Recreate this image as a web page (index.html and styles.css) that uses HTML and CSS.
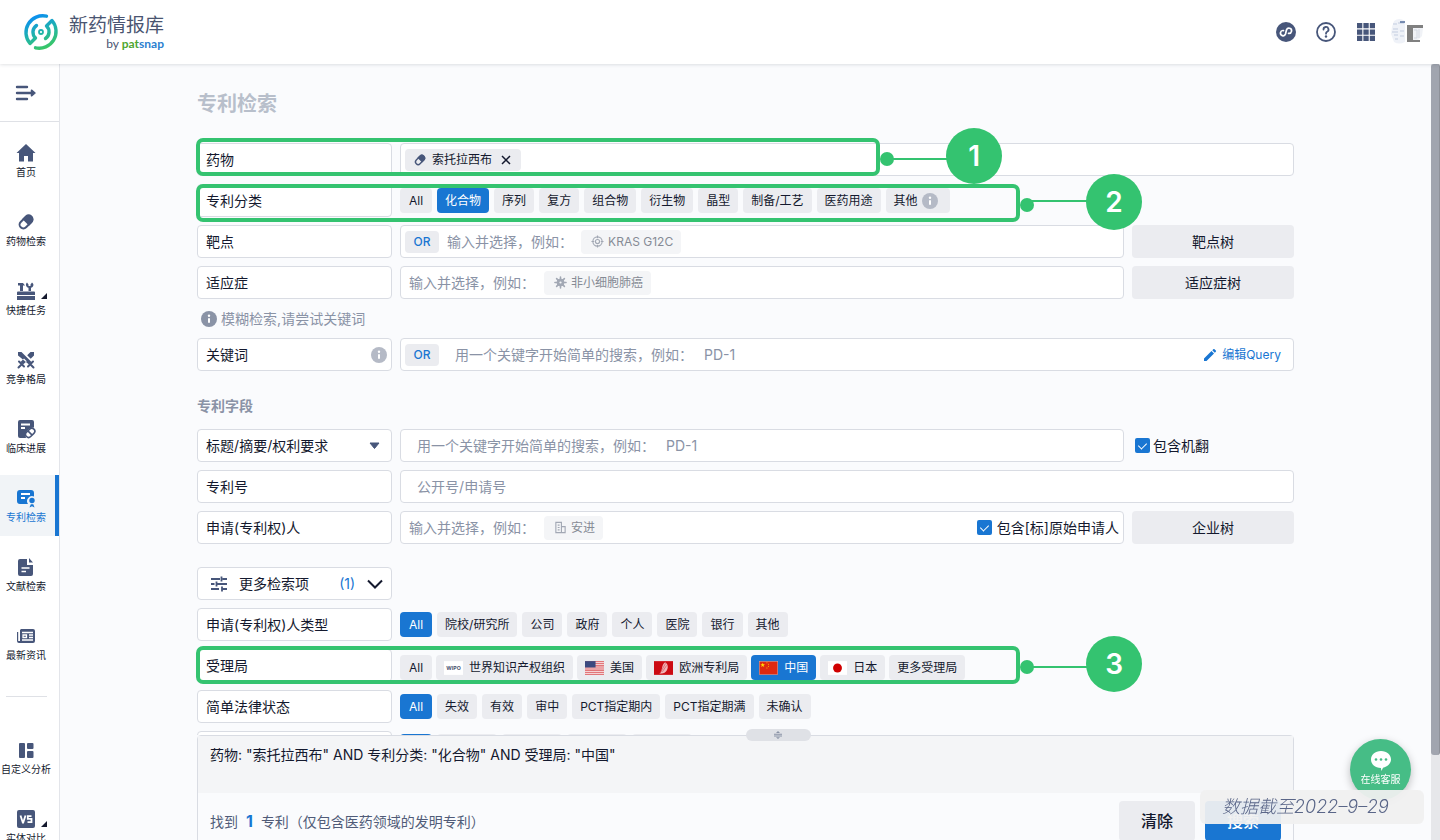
FILE: index.html
```html
<!DOCTYPE html>
<html lang="zh-CN">
<head>
<meta charset="utf-8">
<title>专利检索 - 新药情报库</title>
<meta name="viewport" content="width=device-width, initial-scale=1">
<link rel="stylesheet" href="styles.css">
</head>
<body>
<svg class="sprite" aria-hidden="true">
  <symbol id="pill" viewBox="0 0 20 20"><g transform="rotate(-45 10 10)"><rect x="2.500" y="6.200" width="15" height="7.600" rx="3.800" fill="none" stroke="currentColor" stroke-width="2"/><path d="M2 10a4.700 4.700 0 0 1 4.700-4.700H11v9.400H6.700A4.700 4.700 0 0 1 2 10z" fill="none"/><path d="M9.500 5.200h4.200a4.800 4.800 0 0 1 0 9.600H9.500z" fill="currentColor"/></g></symbol>
  <symbol id="info" viewBox="0 0 16 16"><circle cx="8" cy="8" r="8" fill="currentColor"/><circle cx="8" cy="4.800" r="1.200" fill="#fff"/><rect x="7" y="7" width="2" height="5" rx="1" fill="#fff"/></symbol>
</svg>
<div class="app">
  <header class="topbar">
    <a class="brand" href="#">
      <svg class="brand-mark" viewBox="0 0 38 38" aria-hidden="true">
        <defs><linearGradient id="lg" gradientUnits="userSpaceOnUse" x1="12" y1="2" x2="26" y2="36"><stop offset="0" stop-color="#0a8df5"/><stop offset=".5" stop-color="#20b3ac"/><stop offset="1" stop-color="#3cc95f"/></linearGradient></defs>
        <g fill="none" stroke="url(#lg)" stroke-width="3.400" stroke-linecap="round" stroke-linejoin="round">
          <path d="M24.500 3.200A16.800 16.800 0 0 0 8 30.500L13.500 25A8 8 0 0 1 14.500 12.500"/>
          <path d="M13.500 34.800A16.800 16.800 0 0 0 30 7.500L24.500 13A8 8 0 0 1 23.500 25.500"/>
          <circle cx="19" cy="19" r="2" stroke-width="1.800"/>
        </g>
      </svg>
      <span class="brand-text"><span class="brand-name">新药情报库</span><span class="brand-by">by <span class="pat">pat</span><span class="snap">snap</span></span></span>
    </a>
    <nav class="tools" aria-label="工具">
      <button class="tool" aria-label="小程序"><svg viewBox="0 0 20 20"><circle cx="10" cy="10" r="10" fill="currentColor"/><path d="M7.200 9.200a2.600 2.600 0 1 0 2.800 2.900V7.800a2.600 2.600 0 1 1 2.800 2.900" fill="none" stroke="#fff" stroke-width="1.700" stroke-linecap="round" transform="rotate(14 10 10)"/></svg></button>
      <button class="tool" aria-label="帮助"><svg viewBox="0 0 20 20"><circle cx="10" cy="10" r="9" fill="none" stroke="currentColor" stroke-width="1.800"/><path d="M7.500 7.500a2.500 2.500 0 1 1 3.600 2.200c-.8.400-1.100.8-1.100 2" fill="none" stroke="currentColor" stroke-width="1.800" stroke-linecap="round"/><circle cx="10" cy="14.500" r="1.200" fill="currentColor"/></svg></button>
      <button class="tool" aria-label="应用"><svg viewBox="0 0 20 20" fill="currentColor"><path d="M1 1h5.300v5.300H1zM7.400 1h5.300v5.300H7.400zM13.800 1h5.200v5.300h-5.200zM1 7.400h5.300v5.300H1zM7.400 7.400h5.300v5.300H7.400zM13.800 7.400h5.200v5.300h-5.200zM1 13.800h5.300V19H1zM7.400 13.800h5.300V19H7.400zM13.800 13.800h5.200V19h-5.200z"/></svg></button>
      <button class="avatar" aria-label="账户"><svg viewBox="0 0 34 28"><path d="M4 3Q9-1 15 3v21Q9 27 4 24L1 16 2 9z" fill="#eff2f8"/><path d="M3 6h4M8 5h6M3 11h5M2 14h6M4 17h4M10 13h4M5 21h3M10 18h4" stroke="#c3cde0"/><path d="M10 4h5" stroke="#526d9c" stroke-width="1.500"/><path d="M17 7h16v3H23v12h7v2H17z" fill="#808080"/><path d="M23 10h10l-1 8-4 4h-5z" fill="#f0f2f6"/><path d="M24 12h3v8h-3M29 11v9" fill="none" stroke="#d3d8e2"/></svg></button>
    </nav>
  </header>
  <div class="body">
    <aside class="sidebar">
      <button class="toggle" aria-label="展开菜单"><svg viewBox="0 0 22 16" fill="none" stroke="currentColor" stroke-width="2.400" stroke-linecap="round"><path d="M2 2h10M2 8h15M2 14h10"/><path d="M16.500 5.200 20 8l-3.500 2.800z" fill="currentColor" stroke-width="1.500" stroke-linejoin="round"/></svg></button>
      <nav class="menu">
        <a href="#"><svg viewBox="0 0 20 20" fill="currentColor"><path d="M10 1 19.500 10H17v8.500h-5V13H8v5.500H3V10H.5z"/></svg>首页</a>
        <a href="#"><svg viewBox="0 0 20 20"><use href="#pill"/></svg>药物检索</a>
        <a href="#" class="more"><svg viewBox="0 0 20 20" fill="currentColor"><path d="M2 2h5l2 2.500H7V10H4V4.500H2zM11 1.500l1.500 2V5h2V3.500l1.500-2c2.500 2 1.500 4.500-1 5.300V10h-2.500V6.800C10 6 9 3.500 11 1.500zM2 10.500h16a1 1 0 0 1 1 1V14H1v-2.500a1 1 0 0 1 1-1zM1 15h18v4H1z"/></svg>快捷任务</a>
        <a href="#"><svg viewBox="0 0 20 20" fill="currentColor"><path d="M2 2h3.500l10 10-2.500 2.500L2 5.500zM18 2h-3.500l-3.300 3.300 3.500 3.500L18 5.500zM8 8.500l-3.500 3.500L7 14.500l3.800-3.200z"/><path d="m3 11.500 5 5M17 11.500l-5 5M2.500 17.500l3-3M17.500 17.500l-3-3" fill="none" stroke="currentColor" stroke-width="2" stroke-linecap="round"/></svg>竞争格局</a>
        <a href="#"><svg viewBox="0 0 20 20"><path d="M4 1h12a2 2 0 0 1 2 2v5.500A8 8 0 0 0 10 19H4a2 2 0 0 1-2-2V3a2 2 0 0 1 2-2z" fill="currentColor"/><path d="M5 5.500h9M5 9h4" stroke="#fff" stroke-width="1.800"/><g transform="rotate(-45 14 14)" fill="none" stroke="currentColor" stroke-width="1.600"><rect x="9" y="11" width="10.500" height="6" rx="3"/><path d="M14 11v6"/></g></svg>临床进展</a>
        <a href="#" class="active" aria-current="page"><svg viewBox="0 0 20 20"><path d="M4 2h11a3 3 0 0 1 3 3v3.500A5 5 0 0 0 12 16H4a3 3 0 0 1-3-3V5a3 3 0 0 1 3-3z" fill="currentColor"/><path d="M5 6h9M5 10h4" stroke="#fff" stroke-width="1.800"/><circle cx="16" cy="12.500" r="2.700" fill="currentColor"/><path d="m13.500 19.500 1.300-3.200h2.500l1.200 3.200L16 18.200z" fill="currentColor"/></svg>专利检索</a>
        <a href="#"><svg viewBox="0 0 20 20"><path d="M4 2h7v6h6v9a2 2 0 0 1-2 2H4a2 2 0 0 1-2-2V4a2 2 0 0 1 2-2zM13 1l4 4.500h-4z" fill="currentColor"/><path d="M5.500 11h8M5.500 14.500h4.500" stroke="#fff" stroke-width="1.700"/></svg>文献检索</a>
        <a href="#"><svg viewBox="0 0 20 20"><path d="M5 3h12a2 2 0 0 1 2 2v10a2 2 0 0 1-2 2H3a2 2 0 0 1-2-2V6h1.200v9H4V4z" fill="currentColor"/><path d="M6 6.500h11M6 14h11M13 9h4M13 11.500h4" stroke="#fff" stroke-width="1.300"/><path d="M7 9h3.500v2.500H7z" fill="none" stroke="#fff" stroke-width="1.300"/></svg>最新资讯</a>
        <hr>
        <a href="#"><svg viewBox="0 0 20 20" fill="currentColor"><rect x="3" y="3" width="6" height="15" rx="1"/><rect x="11" y="3" width="6.500" height="6" rx="1"/><rect x="11" y="11" width="6.500" height="7" rx="1"/></svg>自定义分析</a>
        <a href="#" class="more"><svg viewBox="0 0 20 20"><rect x="1" y="1" width="18" height="18" rx="2" fill="currentColor"/><path d="m4.500 6.500 2.300 7h.4l2.300-7M15.500 7.200h-3.700v2.700h3.700v3.300h-4" fill="none" stroke="#fff" stroke-width="1.800"/></svg>实体对比</a>
      </nav>
    </aside>
    <main class="main">
      <form class="search" id="search">
        <h1>专利检索</h1>
        <div class="row wide">
          <label class="name" for="drug">药物</label>
          <div class="field"><span class="tag"><svg class="i14"><use href="#pill"/></svg>索托拉西布<button type="button" aria-label="移除"><svg viewBox="0 0 10 10"><path d="m1 1 8 8M9 1 1 9" stroke="currentColor" stroke-width="1.500"/></svg></button></span><input id="drug" class="grow" type="text"></div>
          <div class="mark mark-a"><i></i><u></u><b>1</b></div>
        </div>
        <div class="row wide">
          <span class="name">专利分类</span>
          <div class="chips"><button type="button">All</button><button type="button" class="on">化合物</button><button type="button">序列</button><button type="button">复方</button><button type="button">组合物</button><button type="button">衍生物</button><button type="button">晶型</button><button type="button">制备/工艺</button><button type="button">医药用途</button><button type="button" class="with-info">其他<svg class="info-soft"><use href="#info"/></svg></button></div>
          <div class="mark mark-b"><i></i><u></u><b>2</b></div>
        </div>
        <div class="row">
          <label class="name" for="target">靶点</label>
          <div class="field"><button type="button" class="op">OR</button><input id="target" class="short" type="text" placeholder="输入并选择，例如："><span class="sample"><svg viewBox="0 0 14 14" fill="none" stroke="currentColor" stroke-width="1.200"><circle cx="7" cy="7" r="5"/><circle cx="7" cy="7" r="2.200"/><path d="M7 .5v3M7 10.500v3M.5 7h3M10.500 7h3"/></svg>KRAS G12C</span></div>
          <button type="button" class="tree">靶点树</button>
        </div>
        <div class="row">
          <label class="name" for="disease">适应症</label>
          <div class="field"><input id="disease" class="short" type="text" placeholder="输入并选择，例如："><span class="sample"><svg viewBox="0 0 14 14" fill="none" stroke="currentColor"><circle cx="7" cy="7" r="3.800" fill="currentColor"/><path stroke-width="1.700" stroke-linecap="round" d="M7 1v12M1 7h12M2.800 2.800l8.400 8.400M11.200 2.800l-8.400 8.400"/><circle cx="7" cy="7" r="1.200" fill="#f4f5f7" stroke="none"/></svg>非小细胞肺癌</span></div>
          <button type="button" class="tree">适应症树</button>
        </div>
        <p class="hint"><svg class="i16"><use href="#info"/></svg>模糊检索,请尝试关键词</p>
        <div class="row wide">
          <label class="name" for="keyword">关键词<svg class="info-soft"><use href="#info"/></svg></label>
          <div class="field"><button type="button" class="op">OR</button><input id="keyword" class="grow inset" type="text" placeholder="用一个关键字开始简单的搜索，例如：　 PD-1"><button type="button" class="edit"><svg viewBox="0 0 14 14" fill="currentColor"><path d="m1 10.500 7.500-7.500 2.500 2.500L3.500 13H1zM9.300 2.200l1-1c.4-.4.800-.4 1.200 0l1.300 1.300c.4.400.4.800 0 1.200l-1 1z"/></svg>编辑Query</button></div>
        </div>
        <h2>专利字段</h2>
        <div class="row">
          <div class="picker"><select aria-label="检索字段"><option>标题/摘要/权利要求</option></select><svg viewBox="0 0 12 8"><path d="M1.500 1h9L6 6.500z" fill="currentColor" stroke="currentColor" stroke-linejoin="round"/></svg></div>
          <div class="field"><input class="grow inset" type="text" aria-label="标题/摘要/权利要求" placeholder="用一个关键字开始简单的搜索，例如：　 PD-1"></div>
          <label class="check"><input type="checkbox" checked>包含机翻</label>
        </div>
        <div class="row wide">
          <label class="name" for="number">专利号</label>
          <div class="field"><input id="number" class="grow inset" type="text" placeholder="公开号/申请号"></div>
        </div>
        <div class="row">
          <label class="name" for="applicant">申请(专利权)人</label>
          <div class="field"><input id="applicant" class="short" type="text" placeholder="输入并选择，例如："><span class="sample"><svg viewBox="0 0 14 14" fill="none" stroke="currentColor" stroke-width="1.200"><path d="M2 12.500v-11h6v11zM8 6h4v6.500H2M4 4.500h2M4 7h2M4 9.500h2"/></svg>安进</span><label class="check push"><input type="checkbox" checked>包含[标]原始申请人</label></div>
          <button type="button" class="tree">企业树</button>
        </div>
        <div class="row spaced">
          <button type="button" class="name expand"><svg class="sliders" viewBox="0 0 18 16" fill="none" stroke="currentColor" stroke-width="1.800"><path d="M1 3h9M12.500 3H17M1 8h3.500M7 8h10M1 13h8M11.500 13H17M11.500 .5v5M6.500 5.500v5M12 10.500v5"/></svg><span>更多检索项</span><em>(1)</em><svg class="caret" viewBox="0 0 16 10"><path d="m1 1.500 7 7 7-7" fill="none" stroke="currentColor" stroke-width="2"/></svg></button>
        </div>
        <div class="row wide">
          <span class="name">申请(专利权)人类型</span>
          <div class="chips"><button type="button" class="on">All</button><button type="button">院校/研究所</button><button type="button">公司</button><button type="button">政府</button><button type="button">个人</button><button type="button">医院</button><button type="button">银行</button><button type="button">其他</button></div>
        </div>
        <div class="row wide">
          <span class="name">受理局</span>
          <div class="chips offices"><button type="button">All</button><button type="button"><svg class="flag" viewBox="0 0 18 13"><rect width="18" height="13" fill="#fff"/><text x="9" y="8" class="wipo">WIPO</text></svg>世界知识产权组织</button><button type="button"><svg class="flag" viewBox="0 0 18 13"><rect width="18" height="13" fill="#fff"/><path d="M0 .5h18M0 2.500h18M0 4.500h18M0 6.500h18M0 8.500h18M0 10.500h18M0 12.500h18" stroke="#d8494f"/><rect width="10" height="6" fill="#3b4a80"/></svg>美国</button><button type="button"><svg class="flag" viewBox="0 0 18 13"><rect width="18" height="13" fill="#cc0a12"/><path d="M10.500 1c4 2 3 8-.5 10-2 1-3 .5-5 1 2-1 2-3 2.500-5S8 3 10.500 1z" fill="#f0b6b8"/><path d="m6 11 5-9M8 10l4-6" stroke="#d64a50" stroke-width=".6"/></svg>欧洲专利局</button><button type="button" class="on"><svg class="flag" viewBox="0 0 18 13"><rect x=".25" y=".25" width="17.500" height="12.500" fill="#de2910" stroke="#f0a08c" stroke-width=".5"/><path d="m3.500 1.500.6 1.500h1.600l-1.300 1 .5 1.600-1.400-1-1.400 1 .5-1.600-1.300-1h1.600z" fill="#ffde00"/><path d="M7 1.500h1M8.500 3h1M8.500 5h1M7 6.500h1" stroke="#ffb800" stroke-width=".8"/></svg>中国</button><button type="button"><svg class="flag" viewBox="0 0 18 13"><rect width="18" height="13" fill="#fff"/><circle cx="9" cy="6.500" r="4.200" fill="#d00000"/></svg>日本</button><button type="button">更多受理局</button></div>
          <div class="mark mark-c"><i></i><u></u><b>3</b></div>
        </div>
        <div class="row wide">
          <span class="name">简单法律状态</span>
          <div class="chips"><button type="button" class="on">All</button><button type="button">失效</button><button type="button">有效</button><button type="button">审中</button><button type="button">PCT指定期内</button><button type="button">PCT指定期满</button><button type="button">未确认</button></div>
        </div>
        <div class="row wide next" aria-hidden="true">
          <span class="name"></span>
          <div class="chips"><span class="on"></span><span></span><span></span><span></span><span></span></div>
        </div>
      </form>
      <section class="summary">
        <button class="grip" aria-label="调整高度"><svg viewBox="0 0 10 8" fill="currentColor"><path d="M1 2.700h8v1H1zM1 4.500h8v1H1zM5 0l2 2H3zM5 8 3 6.200h4z"/></svg></button>
        <p class="query">药物: "索托拉西布" AND 专利分类: "化合物" AND 受理局: "中国"</p>
        <div class="result"><p>找到 <strong>1</strong> 专利（仅包含医药领域的发明专利）</p><button type="reset" form="search">清除</button><button type="submit" form="search" class="primary">搜索</button></div>
      </section>
    </main>
    <div class="scrollbar" aria-hidden="true"><div></div></div>
  </div>
</div>
<button class="support"><svg viewBox="0 0 22 22"><path d="M11 1c6 0 10 3.800 10 8.500 0 4-3.500 7.300-8 8.200L11.500 21l-.6-3C5 18 1 14.200 1 9.500S5 1 11 1z" fill="#fff"/><g fill="#46bd86"><circle cx="6" cy="9.500" r="1.300"/><circle cx="11" cy="9.500" r="1.300"/><circle cx="16" cy="9.500" r="1.300"/></g></svg>在线客服</button>
<div class="stamp">数据截至2022–9–29</div>
</body>
</html>
```

FILE: styles.css
```css
* { box-sizing: border-box; }
:root {
  --ink: #14192e;
  --icon: #47567a;
  --muted: #8a93a6;
  --line: #d9dce3;
  --fill: #ebecf0;
  --blue: #1976d2;
  --green: #34c370;
}
body {
  margin: 0;
  font: 14px/20px Inter, "Noto Sans CJK SC", sans-serif;
  color: var(--ink);
  background: #fafbfd;
}
button, input, select { font: inherit; color: inherit; border: 0; padding: 0; margin: 0; background: none; }
button { cursor: pointer; }
h1, h2, p { margin: 0; }
svg { display: block; flex: none; }
a { color: inherit; text-decoration: none; }
.sprite { position: absolute; width: 0; height: 0; }

.app { height: 100vh; display: flex; flex-direction: column; overflow: hidden; }

/* Top bar */
.topbar {
  height: 64px; flex: none; display: flex; align-items: center; justify-content: space-between;
  padding: 0 16px 0 22px; background: #fff; box-shadow: 0 0 4px rgba(20, 25, 46, .2); z-index: 2;
}
.brand { display: flex; align-items: center; gap: 9px; }
.brand-mark { width: 38px; height: 38px; }
.brand-text { display: flex; flex-direction: column; align-items: flex-end; color: #4a5571; }
.brand-name { font-size: 19px; line-height: 24px; }
.brand-by { font: 12px/12px Lato, sans-serif; }
.pat { color: #4ea62f; font-weight: 700; }
.snap { color: #2b7fd0; font-weight: 700; }
.tools { display: flex; align-items: center; gap: 20px; color: var(--icon); }
.tool, .tool svg { width: 20px; height: 20px; }
.avatar { margin-left: -6px; }
.avatar svg { width: 34px; height: 28px; }

.body { flex: 1; min-height: 0; display: flex; }

/* Side menu */
.sidebar { width: 60px; flex: none; background: #fff; border-right: 1px solid #e3e5ea; overflow: hidden; color: var(--icon); }
.toggle { display: flex; width: 100%; height: 58px; padding-left: 15px; align-items: center; border-bottom: 1px solid #dfe1e6; }
.toggle svg { width: 22px; height: 16px; }
.menu { display: flex; flex-direction: column; gap: 8px; padding-top: 8px; }
.menu a {
  position: relative; display: flex; flex-direction: column; align-items: center; gap: 2px;
  padding: 13px 7px 12px 0; font-size: 10px; line-height: 14px; color: var(--ink); white-space: nowrap;
}
.menu svg { width: 20px; height: 20px; color: var(--icon); }
.menu .active { background: #f1f4f7; color: var(--blue); border-right: 4px solid var(--blue); padding-right: 3px; }
.menu .active svg { color: var(--blue); }
.menu .more::after { content: ""; position: absolute; right: 12px; top: 25px; border: 3px solid; border-color: transparent var(--ink) var(--ink) transparent; }
.menu hr { width: 41px; margin: 14px 0 22px 6px; border: 0; border-top: 1px solid #dfe1e6; }

/* Search form */
.main { flex: 1; min-width: 0; display: flex; flex-direction: column; }
.search { flex: 1; min-height: 0; overflow: hidden; padding: 28px 10% 0; display: flex; flex-direction: column; gap: 8px; }
.search > * { flex: none; }
h1 { font-size: 20px; line-height: 24px; margin-bottom: 19px; color: #b8bfcb; }
h2 { font-size: 14px; line-height: 20px; padding: 17px 0 5px; color: var(--muted); }
.row { position: relative; display: grid; grid-template-columns: 195px 1fr 162px; gap: 8px; min-height: 33px; }
.row.wide { grid-template-columns: 195px 1fr; }
.spaced { margin-top: 15px; }
.name, .field, .picker { height: 33px; display: flex; align-items: center; border: 1px solid var(--line); border-radius: 4px; background: #fff; }
.name { padding: 0 4px 0 8px; justify-content: space-between; }
.field { padding: 0 4px; }
.field input[type="text"] { height: 28px; min-width: 0; outline: none; }
.field input::placeholder { color: var(--muted); opacity: 1; }
.field .short { width: 135px; margin-left: 4px; }
.field .op + .short { width: 134px; margin-left: 8px; }
.grow { flex: 1; }
.field .inset { margin-left: 12px; }
.field .op + .inset { margin-left: 16px; }
.op { width: 34px; height: 22px; border-radius: 4px; background: var(--fill); color: var(--blue); font-size: 12px; font-weight: 500; }
.tag, .sample { height: 24px; display: flex; align-items: center; gap: 4px; padding: 0 8px 0 10px; border-radius: 4px; font-size: 12px; }
.tag { background: var(--fill); height: 22px; gap: 5px; padding: 0 10px 0 8px; }
.tag > svg { color: var(--icon); }
.tag button { margin-left: 4px; }
.tag button svg { width: 10px; height: 10px; }
.sample { background: #f4f5f7; color: #868b95; }
.sample svg { width: 13px; height: 13px; color: #a2a8b4; }
.i14 { width: 14px; height: 14px; }
.i16, .info-soft { width: 16px; height: 16px; }
.info-soft { color: #b5bac6; }
.hint { display: flex; align-items: center; gap: 4px; padding-left: 4px; height: 23px; color: var(--muted); }
.edit { display: flex; align-items: center; gap: 5px; margin-right: 8px; font-size: 12px; color: var(--blue); }
.edit svg { width: 14px; height: 14px; }
.tree { height: 33px; border-radius: 4px; background: var(--fill); }
.check { display: flex; align-items: center; gap: 3px; padding-left: 3px; white-space: nowrap; }
.push { margin-left: auto; gap: 5px; }
.check input { position: relative; appearance: none; width: 15px; height: 15px; border-radius: 2px; background: var(--blue); }
.check input:checked::after { content: ""; position: absolute; left: 5px; top: 3px; width: 4px; height: 7px; border: solid #fff; border-width: 0 1px 1px 0; transform: rotate(45deg); }
.picker { position: relative; color: var(--icon); }
.picker select { appearance: none; width: 100%; height: 100%; padding-left: 8px; color: var(--ink); outline: none; }
.picker svg { position: absolute; right: 10px; width: 13px; height: 8px; pointer-events: none; }
.expand { padding: 0 8px 0 12px; justify-content: flex-start; }
.sliders { width: 18px; height: 16px; margin-right: 11px; color: var(--icon); }
.expand em { margin-left: auto; margin-right: 12px; font-style: normal; color: var(--blue); }
.caret { width: 16px; height: 10px; }

.chips { display: flex; gap: 5px; padding-top: 4px; }
.chips > * { display: flex; align-items: center; justify-content: center; gap: 7px; min-width: 32px; height: 25px; padding: 0 8px; border-radius: 4px; background: var(--fill); font-size: 12px; white-space: nowrap; }
.chips .on { background: var(--blue); color: #fff; }
.chips .with-info { gap: 4px; padding-right: 12px; }
.chips.offices { gap: 4px; padding-top: 6px; }
.offices button { gap: 6px; }
.next .chips { padding-top: 3px; }
.next .chips span { width: 60px; }
.next .chips .on { width: 32px; }
.flag { width: 19px; height: 14px; }
.wipo { font: 700 5px Inter, sans-serif; text-anchor: middle; fill: #4a5470; }

/* Numbered callouts laid over the rows */
.mark { position: absolute; left: -1px; top: -5px; width: 684px; height: 38px; border: 4px solid var(--green); border-radius: 7px; z-index: 1; pointer-events: none; }
.mark i { position: absolute; left: 680px; top: 10px; width: 14px; height: 14px; border-radius: 50%; background: var(--green); }
.mark u { position: absolute; left: 690px; top: 16px; width: 60px; height: 2px; background: var(--green); }
.mark b { position: absolute; left: 746px; top: -14px; width: 56px; height: 56px; border-radius: 50%; background: var(--green); color: #fff; font-size: 28px; line-height: 56px; font-weight: 600; text-align: center; }
.mark-b, .mark-c { width: 824px; }
.mark-b { top: 0; }
.mark-c { top: -3px; }
.mark-b i, .mark-c i { left: 820px; }
.mark-b u, .mark-c u { left: 830px; }
.mark-b b, .mark-c b { left: 886px; }
.mark-b u { top: 12px; }

/* Query summary */
.summary { position: relative; flex: none; margin: 0 10% -10px; border: 1px solid var(--line); border-radius: 4px 4px 0 0; background: #fafbfd; }
.grip { position: absolute; left: 50%; top: -7px; width: 65px; height: 12px; border-radius: 6px; background: #dfe1e6; color: var(--muted); }
.grip svg { width: 10px; height: 8px; margin: 0 auto; }
.query { min-height: 57px; padding: 9px 12px; background: #f4f5f7; }
.result { display: flex; align-items: center; gap: 10px; padding: 8px 12px; color: #505b78; }
.result p { margin-right: auto; }
.result strong { margin: 0 4px; font-size: 16px; color: var(--blue); }
.result button { width: 76px; height: 40px; border-radius: 4px; background: var(--fill); color: var(--ink); font-size: 16px; font-weight: 500; }
.result .primary { background: var(--blue); color: #fff; }

.scrollbar { width: 9px; flex: none; background: #e6e7ea; }
.scrollbar div { height: 89%; border-radius: 3px; background: #a1a5af; border-right: 1px solid #8e9199; }

/* Floating items */
.support { position: fixed; right: 29px; bottom: 40px; width: 61px; height: 61px; padding-bottom: 4px; border-radius: 50%; background: #46bd86; color: #fff; font-size: 10px; line-height: 14px; box-shadow: 0 3px 8px rgba(0, 0, 0, .25); z-index: 3; }
.support svg { width: 22px; height: 22px; margin: 0 auto; }
.stamp { position: fixed; right: 16px; bottom: 16px; width: 224px; height: 34px; padding-left: 22px; border-radius: 6px; background: rgba(240, 240, 240, .94); color: #5a6688; font-size: 18px; line-height: 34px; font-weight: 300; font-style: italic; white-space: nowrap; z-index: 4; }
```
